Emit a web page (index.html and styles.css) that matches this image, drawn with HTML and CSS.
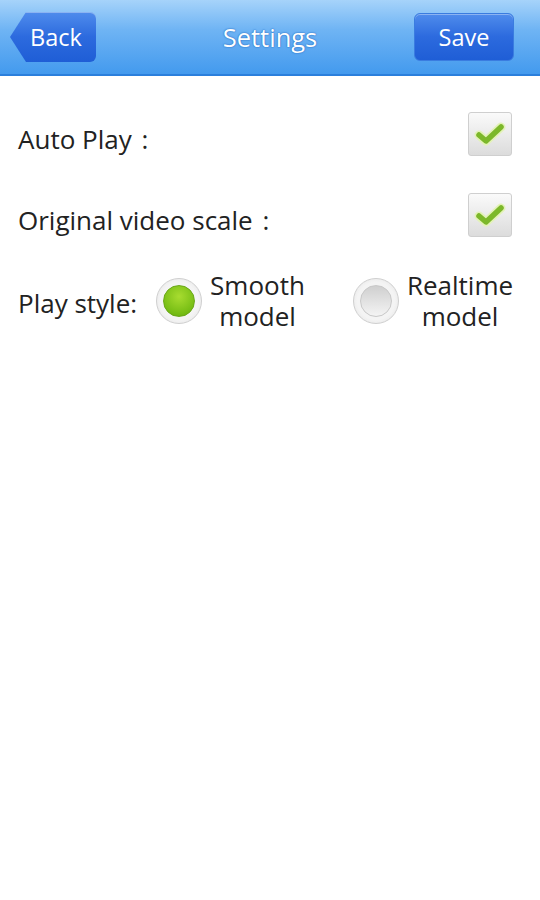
FILE: index.html
```html
<!DOCTYPE html>
<html lang="en">
<head>
  <meta charset="UTF-8" />
  <meta name="viewport" content="width=device-width, initial-scale=1.0" />
  <title>Settings</title>
  <link rel="stylesheet" href="styles.css">
</head>
<body>
  <div class="titlebar">
    <button class="back">Back</button>
    <div class="title">Settings</div>
    <button class="save">Save</button>
  </div>

  <div class="settings">
    <div class="row">
      <span class="label">Auto Play <span class="colon">:</span></span>
      <span class="check">
        <svg width="32" height="26" viewBox="0 0 32 26"><path d="M5 14 L12 20 L27 6" fill="none" stroke="#e3f2b8" stroke-width="9" stroke-linecap="round" stroke-linejoin="round"/><path d="M5 14 L12 20 L27 6" fill="none" stroke="#7cb82a" stroke-width="5.5" stroke-linecap="round" stroke-linejoin="round"/></svg>
      </span>
    </div>
    <div class="row">
      <span class="label">Original video scale <span class="colon">:</span></span>
      <span class="check">
        <svg width="32" height="26" viewBox="0 0 32 26"><path d="M5 14 L12 20 L27 6" fill="none" stroke="#e3f2b8" stroke-width="9" stroke-linecap="round" stroke-linejoin="round"/><path d="M5 14 L12 20 L27 6" fill="none" stroke="#7cb82a" stroke-width="5.5" stroke-linecap="round" stroke-linejoin="round"/></svg>
      </span>
    </div>
    <div class="row style-row">
      <span class="label">Play style:</span>
      <div class="option">
        <span class="radio on"><span class="dot"></span></span>
        <span class="opt-text"><span>Smooth</span><span>model</span></span>
      </div>
      <div class="option">
        <span class="radio"><span class="dot"></span></span>
        <span class="opt-text"><span>Realtime</span><span>model</span></span>
      </div>
    </div>
  </div>
</body>
</html>
```

FILE: styles.css
```css
body {
  margin: 0;
  background: #fff;
  font-family: 'Open Sans', 'DejaVu Sans', sans-serif;
  color: #222;
}

.titlebar {
  height: 74px;
  display: flex;
  align-items: center;
  justify-content: space-between;
  padding: 0 26px 0 10px;
  background: linear-gradient(to bottom, #a6d3fa 0%, #6fb4f4 40%, #439aee 100%);
  border-bottom: 2px solid #2b7fdc;
  position: relative;
}

.title {
  position: absolute;
  left: 0;
  right: 0;
  text-align: center;
  color: #fff;
  font-size: 25.5px;
  text-shadow: 0 0 2px #2a6fc4, 0 0 1px #2a6fc4;
  pointer-events: none;
}

.back,
.save {
  position: relative;
  z-index: 1;
  height: 50px;
  border: none;
  color: #fff;
  font-family: inherit;
  font-size: 23.5px;
  background: linear-gradient(to bottom, #4f8cec 0%, #2c6ade 50%, #1f5ed6 100%);
  box-shadow: inset 0 1px 0 rgba(255,255,255,0.35);
}

.back {
  width: 86px;
  padding-left: 12px;
  border-radius: 6px;
  clip-path: polygon(16px 0, 100% 0, 100% 100%, 16px 100%, 0 50%);
}

.save {
  width: 100px;
  height: 48px;
  border-radius: 6px;
  border: 1px solid #3a7ce0;
}

.settings {
  padding: 17px 28px 0 18px;
}

.row {
  display: flex;
  align-items: center;
  justify-content: space-between;
  height: 81px;
  font-size: 26px;
  white-space: nowrap;
}

.label {
  flex-shrink: 0;
  padding-top: 10px;
}

.colon {
  margin-left: 3px;
}

.check {
  width: 44px;
  height: 44px;
  box-sizing: border-box;
  border: 1px solid #cfcfcf;
  border-radius: 3px;
  background: linear-gradient(to bottom, #fafafa, #dcdcdc);
  display: flex;
  align-items: center;
  justify-content: center;
}

.style-row {
  justify-content: flex-start;
  height: 80px;
  padding-top: 6px;
  margin-right: -26px;
}

.style-row .label {
  padding-top: 4px;
}

.option {
  display: flex;
  align-items: center;
  flex-shrink: 0;
  margin-left: 19px;
}

.option + .option {
  margin-left: 48px;
}

.radio {
  width: 46px;
  height: 46px;
  box-sizing: border-box;
  border-radius: 50%;
  border: 1px solid #cfcfcf;
  background: radial-gradient(circle, #f4f4f4 60%, #dedede 100%);
  display: flex;
  align-items: center;
  justify-content: center;
}

.radio .dot {
  width: 32px;
  height: 32px;
  border-radius: 50%;
  box-sizing: border-box;
  border: 1px solid #c8c8c8;
  background: linear-gradient(to bottom, #cfcfcf, #f4f4f4);
}

.radio.on .dot {
  border: 1px solid #6aa818;
  background: radial-gradient(circle at 50% 35%, #a8dc30, #76bd14 70%, #5fa20c);
}

.opt-text {
  display: flex;
  flex-direction: column;
  align-items: center;
  margin-left: 8px;
  line-height: 31px;
}
```
